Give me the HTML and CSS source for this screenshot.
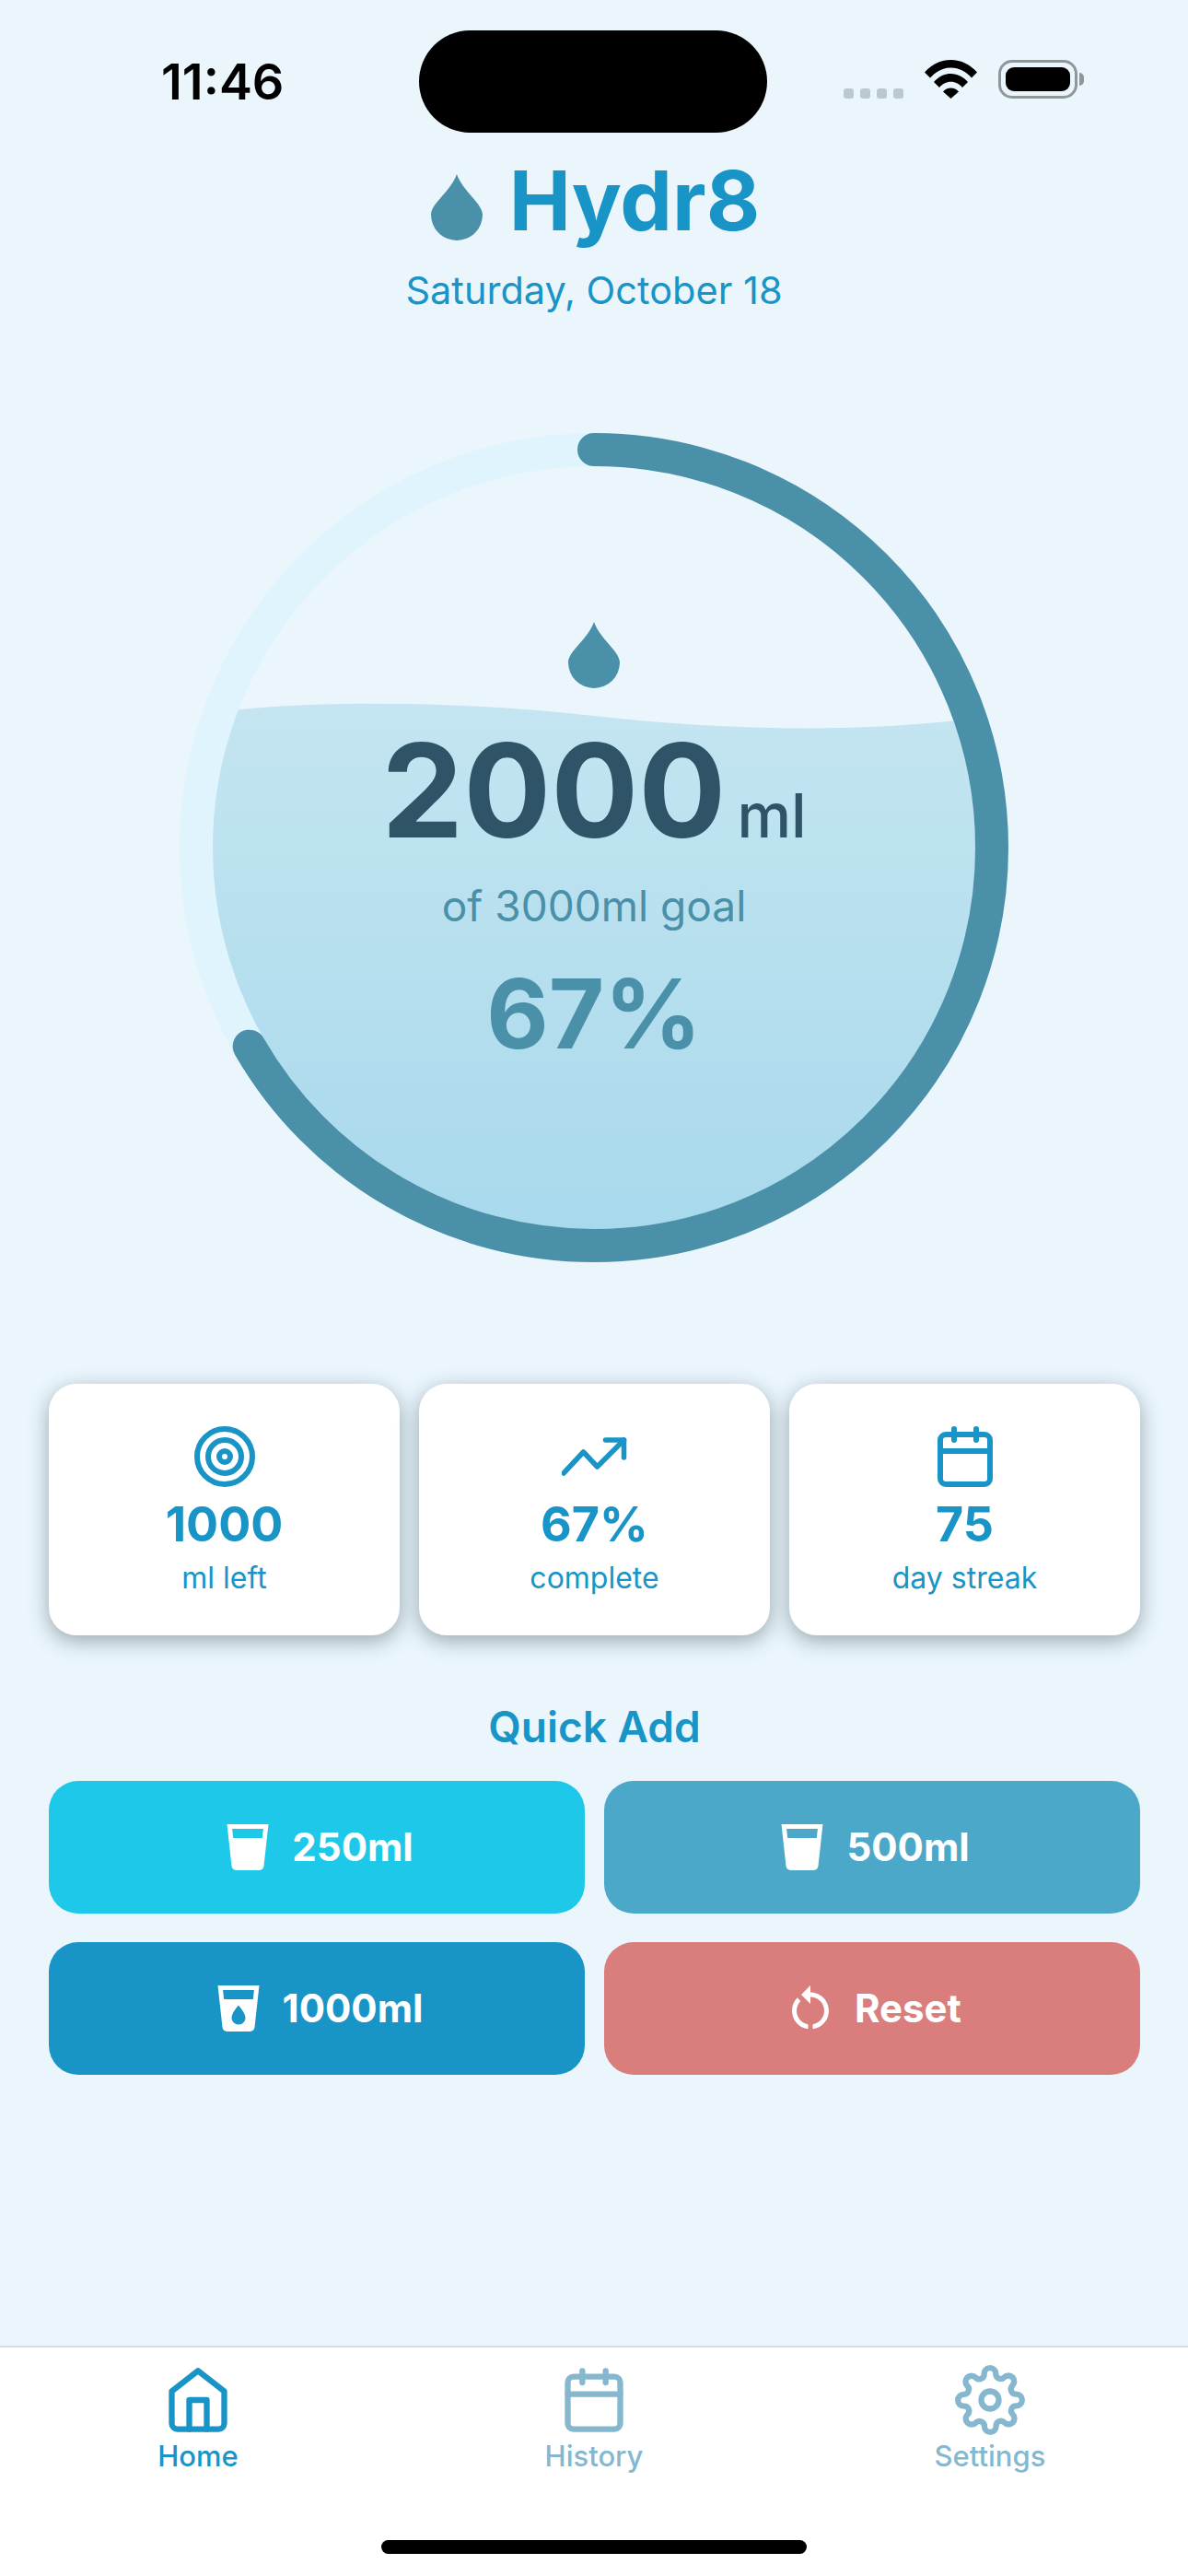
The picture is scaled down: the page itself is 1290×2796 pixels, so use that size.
FILE: index.html
```html
<!DOCTYPE html>
<html lang="en">
<head>
  <meta charset="UTF-8">
  <meta name="viewport" content="width=device-width, initial-scale=1.0">
  <title>Hydr8</title>
  <link rel="stylesheet" href="styles.css">
</head>
<body>
  <div class="app">
    <div class="status-bar">
      <div class="status-time">11:46</div>
      <div class="island"></div>
      <div class="status-icons">
        <div class="signal"><span></span><span></span><span></span><span></span></div>
        <svg class="wifi" width="57" height="42" viewBox="0 0 57 42">
          <path d="M0 13.5C7.300 5.200 17.300 0 28.500 0S49.700 5.200 57 13.500L51 19.500C45.200 12.800 37.300 8.500 28.500 8.500S11.800 12.800 6 19.500Z"/>
          <path d="M10 24C14.800 18.500 21.300 15 28.500 15S42.200 18.500 47 24L41 30C37.800 26.200 33.400 23.800 28.500 23.800S19.200 26.200 16 30Z"/>
          <path d="M20 34.500C22.200 32 25.200 30.500 28.500 30.500S34.800 32 37 34.500L28.500 42Z"/>
        </svg>
        <div class="battery"><div class="battery-level"></div></div>
        <div class="battery-nub"></div>
      </div>
    </div>

    <header class="app-header">
      <div class="brand">
        <svg class="drop" width="56" height="72" viewBox="0 0 56 72"><path d="M28 0C22 18 0 32 0 44a28 28 0 0 0 56 0C56 32 34 18 28 0Z"/></svg>
        <h1>Hydr8</h1>
      </div>
      <div class="date">Saturday, October 18</div>
    </header>

    <section class="gauge">
      <svg class="gauge-ring" width="900" height="900" viewBox="0 0 900 900">
        <defs>
          <clipPath id="inner"><circle cx="450" cy="450" r="415"/></clipPath>
          <linearGradient id="water" gradientUnits="userSpaceOnUse" x1="0" y1="294" x2="0" y2="864">
            <stop offset="0" stop-color="#c4e5f1"/>
            <stop offset="1" stop-color="#a8d9ec"/>
          </linearGradient>
        </defs>
        <path clip-path="url(#inner)" fill="url(#water)" d="M36 304C130 290 300 290 450 307S750 325 866 309V866H36Z"/>
        <circle class="ring-track" cx="450" cy="450" r="432"/>
        <circle class="ring-progress" cx="450" cy="450" r="432" stroke-dasharray="1809.5 2714.3" transform="rotate(-90 450 450)"/>
      </svg>
      <div class="gauge-text">
        <svg class="drop" width="56" height="72" viewBox="0 0 56 72"><path d="M28 0C22 18 0 32 0 44a28 28 0 0 0 56 0C56 32 34 18 28 0Z"/></svg>
        <div class="amount"><span class="amount-value">2000</span><span class="amount-unit">ml</span></div>
        <div class="goal">of 3000ml goal</div>
        <div class="percent">67%</div>
      </div>
    </section>

    <section class="stats">
      <div class="stat-card">
        <svg class="line-icon" width="72" height="72" viewBox="0 0 24 24"><circle cx="12" cy="12" r="10"/><circle cx="12" cy="12" r="6"/><circle cx="12" cy="12" r="2"/></svg>
        <div class="stat-value">1000</div>
        <div class="stat-label">ml left</div>
      </div>
      <div class="stat-card">
        <svg class="line-icon trend" width="72" height="72" viewBox="0 0 72 72"><polyline points="2 54 23.500 31 38.500 47 67.500 18"/><polyline points="47.500 18 67.500 18 67.500 37"/></svg>
        <div class="stat-value">67%</div>
        <div class="stat-label">complete</div>
      </div>
      <div class="stat-card">
        <svg class="line-icon" width="72" height="72" viewBox="0 0 24 24"><rect x="3" y="4" width="18" height="18" rx="2"/><line x1="16" y1="2" x2="16" y2="6"/><line x1="8" y1="2" x2="8" y2="6"/><line x1="3" y1="10" x2="21" y2="10"/></svg>
        <div class="stat-value">75</div>
        <div class="stat-label">day streak</div>
      </div>
    </section>

    <section class="quick-add">
      <h2>Quick Add</h2>
      <div class="quick-grid">
        <button class="quick-btn small">
          <svg width="60" height="60" viewBox="0 0 24 24"><path fill-rule="evenodd" d="M3 2l2.010 18.230C5.130 21.230 5.970 22 7 22h10c1.030 0 1.870-.77 1.990-1.770L21 2H3zm15.330 6H5.670l-.44-4h13.530l-.43 4z"/></svg>
          250ml
        </button>
        <button class="quick-btn medium">
          <svg width="60" height="60" viewBox="0 0 24 24"><path fill-rule="evenodd" d="M3 2l2.010 18.230C5.130 21.230 5.970 22 7 22h10c1.030 0 1.870-.77 1.990-1.770L21 2H3zm15.330 6H5.670l-.44-4h13.530l-.43 4z"/></svg>
          500ml
        </button>
        <button class="quick-btn large">
          <svg width="60" height="60" viewBox="0 0 24 24"><path fill-rule="evenodd" d="M3 2l2.010 18.230C5.130 21.230 5.970 22 7 22h10c1.030 0 1.870-.77 1.990-1.770L21 2H3zm9 17c-1.660 0-3-1.340-3-3 0-2 3-5.400 3-5.400s3 3.400 3 5.400c0 1.660-1.340 3-3 3zm6.330-11H5.670l-.44-4h13.530l-.43 4z"/></svg>
          1000ml
        </button>
        <button class="quick-btn reset">
          <svg width="60" height="60" viewBox="0 0 24 24"><path d="M12 5V2L8 6l4 4V7c3.310 0 6 2.690 6 6 0 2.970-2.170 5.430-5 5.910v2.020c3.950-.49 7-3.850 7-7.930 0-4.420-3.580-8-8-8zm-6 8c0-1.650.67-3.150 1.760-4.240L6.340 7.340C4.900 8.790 4 10.790 4 13c0 4.080 3.050 7.440 7 7.930v-2.020c-2.830-.48-5-2.940-5-5.910z"/></svg>
          Reset
        </button>
      </div>
    </section>

    <nav class="tab-bar">
      <div class="tabs">
        <div class="tab active">
          <svg class="line-icon" width="76" height="76" viewBox="0 0 24 24"><path d="M3 9l9-7 9 7v11a2 2 0 0 1-2 2H5a2 2 0 0 1-2-2z"/><polyline points="9 22 9 12 15 12 15 22"/></svg>
          <span>Home</span>
        </div>
        <div class="tab">
          <svg class="line-icon" width="76" height="76" viewBox="0 0 24 24"><rect x="3" y="4" width="18" height="18" rx="2"/><line x1="16" y1="2" x2="16" y2="6"/><line x1="8" y1="2" x2="8" y2="6"/><line x1="3" y1="10" x2="21" y2="10"/></svg>
          <span>History</span>
        </div>
        <div class="tab">
          <svg class="line-icon" width="76" height="76" viewBox="0 0 24 24"><circle cx="12" cy="12" r="3"/><path d="M19.400 15a1.650 1.650 0 0 0 .33 1.820l.06.06a2 2 0 0 1 0 2.830 2 2 0 0 1-2.830 0l-.06-.06a1.650 1.650 0 0 0-1.820-.33 1.650 1.650 0 0 0-1 1.510V21a2 2 0 0 1-2 2 2 2 0 0 1-2-2v-.09A1.650 1.650 0 0 0 9 19.400a1.650 1.650 0 0 0-1.820.33l-.06.06a2 2 0 0 1-2.830 0 2 2 0 0 1 0-2.830l.06-.06a1.650 1.650 0 0 0 .33-1.820 1.650 1.650 0 0 0-1.510-1H3a2 2 0 0 1-2-2 2 2 0 0 1 2-2h.09A1.650 1.650 0 0 0 4.600 9a1.650 1.650 0 0 0-.33-1.820l-.06-.06a2 2 0 0 1 0-2.830 2 2 0 0 1 2.830 0l.06.06a1.650 1.650 0 0 0 1.820.33H9a1.650 1.650 0 0 0 1-1.510V3a2 2 0 0 1 2-2 2 2 0 0 1 2 2v.09a1.650 1.650 0 0 0 1 1.510 1.650 1.650 0 0 0 1.820-.33l.06-.06a2 2 0 0 1 2.830 0 2 2 0 0 1 0 2.830l-.06.06a1.650 1.650 0 0 0-.33 1.820V9a1.650 1.650 0 0 0 1.510 1H21a2 2 0 0 1 2 2 2 2 0 0 1-2 2h-.09a1.650 1.650 0 0 0-1.510 1z"/></svg>
          <span>Settings</span>
        </div>
      </div>
      <div class="home-indicator"></div>
    </nav>
  </div>
</body>
</html>
```

FILE: styles.css
```css
* {
  box-sizing: border-box;
}

body {
  margin: 0;
  font-family: Inter, "Liberation Sans", sans-serif;
  background-color: #eaf6fc;
}

.app {
  display: flex;
  flex-direction: column;
  width: 1290px;
  height: 2796px;
  overflow: hidden;
}

/* status bar */
.status-bar {
  display: flex;
  align-items: flex-start;
  height: 144px;
  padding: 33px 0 0 175px;
}

.status-time {
  width: 280px;
  padding-top: 30px;
  font-size: 54px;
  line-height: 52px;
  font-weight: 600;
  color: #000;
}

.island {
  width: 378px;
  height: 111px;
  border-radius: 56px;
  background-color: #000;
}

.status-icons {
  display: flex;
  align-items: flex-end;
  height: 74px;
  margin-left: 83px;
}

.signal {
  display: flex;
  gap: 7px;
  margin-right: 23px;
}

.signal span {
  width: 11px;
  height: 11px;
  border-radius: 3px;
  background-color: #bcc8cf;
}

.wifi {
  fill: #000;
  margin-right: 23px;
}

.battery {
  width: 86px;
  height: 42px;
  padding: 5px;
  border: 3px solid #8f979b;
  border-radius: 15px;
}

.battery-level {
  width: 100%;
  height: 100%;
  border-radius: 9px;
  background-color: #000;
}

.battery-nub {
  width: 5px;
  height: 14px;
  margin: 0 0 14px 2px;
  border-radius: 0 5px 5px 0;
  background-color: #8f979b;
}

/* header */
.app-header {
  display: flex;
  flex-direction: column;
  align-items: center;
  padding-top: 20px;
}

.brand {
  display: flex;
  align-items: center;
  gap: 29px;
  padding-left: 3px;
}

.drop {
  flex-shrink: 0;
  fill: #4a90a8;
}

.brand .drop {
  margin-top: 14px;
}

.brand h1 {
  margin: 0;
  font-size: 90px;
  line-height: 108px;
  font-weight: 700;
  color: #1994c7;
}

.date {
  margin-top: 18px;
  font-size: 41.5px;
  line-height: 50px;
  color: #1994c7;
}

/* gauge */
.gauge {
  display: grid;
  width: 900px;
  height: 900px;
  margin: 130px auto 0;
}

.gauge-ring,
.gauge-text {
  grid-area: 1 / 1;
}

.ring-track,
.ring-progress {
  fill: none;
  stroke-width: 36;
}

.ring-track {
  stroke: #e0f4fe;
}

.ring-progress {
  stroke: #4a90a8;
  stroke-linecap: round;
}

.gauge-text {
  display: flex;
  flex-direction: column;
  align-items: center;
  padding-top: 205px;
}

.amount {
  display: flex;
  align-items: baseline;
  gap: 12px;
  margin-top: 46px;
  color: #2f5467;
}

.amount-value {
  font-size: 141px;
  line-height: 130px;
  font-weight: 700;
}

.amount-unit {
  font-size: 66px;
  line-height: 68px;
  font-weight: 500;
}

.goal {
  margin-top: 35px;
  font-size: 46px;
  line-height: 50px;
  color: #4a90a8;
}

.percent {
  margin-top: 37px;
  font-size: 104px;
  line-height: 110px;
  font-weight: 700;
  color: #4a90a8;
}

/* stats */
.stats {
  display: grid;
  grid-template-columns: repeat(3, 1fr);
  gap: 21px;
  margin-top: 132px;
  padding: 0 52px 0 53px;
}

.stat-card {
  display: flex;
  flex-direction: column;
  align-items: center;
  height: 273px;
  padding-top: 43px;
  border-radius: 30px;
  background-color: #fff;
  box-shadow: 0 6px 22px rgba(40, 60, 70, 0.42);
}

.line-icon {
  flex-shrink: 0;
  fill: none;
  stroke: #1994c7;
  stroke-width: 2;
  stroke-linecap: round;
  stroke-linejoin: round;
}

.trend {
  stroke-width: 5.5;
}

.stat-value {
  margin-top: 8px;
  font-size: 52px;
  line-height: 60px;
  font-weight: 700;
  color: #1994c7;
}

.stat-label {
  margin-top: 8px;
  font-size: 32px;
  line-height: 40px;
  color: #1994c7;
}

/* quick add */
.quick-add {
  margin-top: 71px;
  padding: 0 52px 0 53px;
}

.quick-add h2 {
  margin: 0 0 31px;
  font-size: 46px;
  line-height: 56px;
  font-weight: 600;
  text-align: center;
  color: #1994c7;
}

.quick-grid {
  display: grid;
  grid-template-columns: 1fr 1fr;
  gap: 31px 21px;
}

.quick-btn {
  display: flex;
  align-items: center;
  justify-content: center;
  gap: 18px;
  height: 144px;
  padding-bottom: 2px;
  border: none;
  border-radius: 32px;
  font-family: inherit;
  font-size: 42px;
  font-weight: 700;
  color: #fff;
}

.quick-btn svg {
  fill: #fff;
}

.small { background-color: #1ec8e8; }
.medium { background-color: #4ba8c9; }
.large { background-color: #1994c7; }
.reset { background-color: #d97d7d; }

/* tab bar */
.tab-bar {
  display: flex;
  flex-direction: column;
  height: 250px;
  margin-top: auto;
  border-top: 2px solid #d5dde3;
  background-color: #fff;
}

.tabs {
  display: grid;
  grid-template-columns: repeat(3, 1fr);
  padding-top: 19px;
}

.tab {
  display: flex;
  flex-direction: column;
  align-items: center;
  font-size: 31px;
  line-height: 36px;
  font-weight: 500;
  color: #85b7cf;
}

.tab .line-icon {
  stroke: #85b7cf;
}

.tab.active {
  color: #1994c7;
}

.tab.active .line-icon {
  stroke: #1994c7;
}

.tab span {
  margin-top: 5px;
}

.home-indicator {
  width: 462px;
  height: 15px;
  margin: auto auto 24px;
  border-radius: 8px;
  background-color: #000;
}
```
